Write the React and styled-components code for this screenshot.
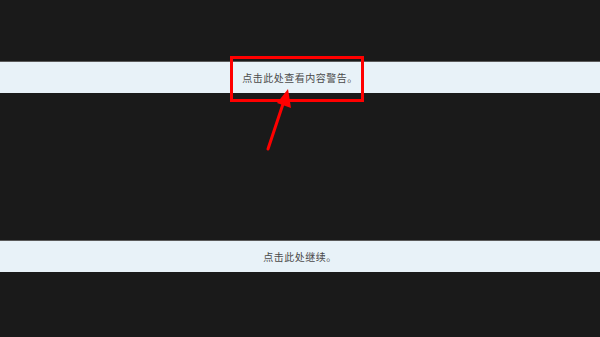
import styled, { createGlobalStyle } from 'styled-components'

const GlobalStyle = createGlobalStyle`
  html, body {
    margin: 0;
    padding: 0;
    background: #1a1a1a;
  }
  body {
    font-family: "Noto Sans CJK SC", "Noto Sans", sans-serif;
  }
`

const Page = styled.div`
  position: relative;
  width: 600px;
  height: 337px;
  background: #1a1a1a;
  display: flex;
  flex-direction: column;
  padding-top: 61px;
  box-sizing: border-box;
  gap: 147px;
  overflow: hidden;
`

const Bar = styled.div`
  height: 31px;
  border-top: 1px solid #5a5a5a;
  background: #e8f2f8;
  display: flex;
  align-items: center;
  justify-content: center;
  font-size: 10px;
  letter-spacing: 0.5px;
  color: #4a4a4a;
`

const Highlight = styled.div`
  position: absolute;
  left: 230px;
  top: 56px;
  width: 128px;
  height: 40px;
  border: 3px solid #ff0000;
`

const Arrow = styled.svg`
  position: absolute;
  left: 0;
  top: 0;
  pointer-events: none;
`

const App = () => {
  return (
    <>
      <GlobalStyle />
      <Page>
        <Bar>点击此处查看内容警告。</Bar>
        <Bar>点击此处继续。</Bar>
        <Highlight />
        <Arrow width="600" height="337" viewBox="0 0 600 337">
          <line x1="268" y1="149" x2="283" y2="104" stroke="#ff0000" strokeWidth="3" strokeLinecap="round" />
          <polygon points="288,89 277,103 291,108" fill="#ff0000" />
        </Arrow>
      </Page>
    </>
  )
}

export default App
